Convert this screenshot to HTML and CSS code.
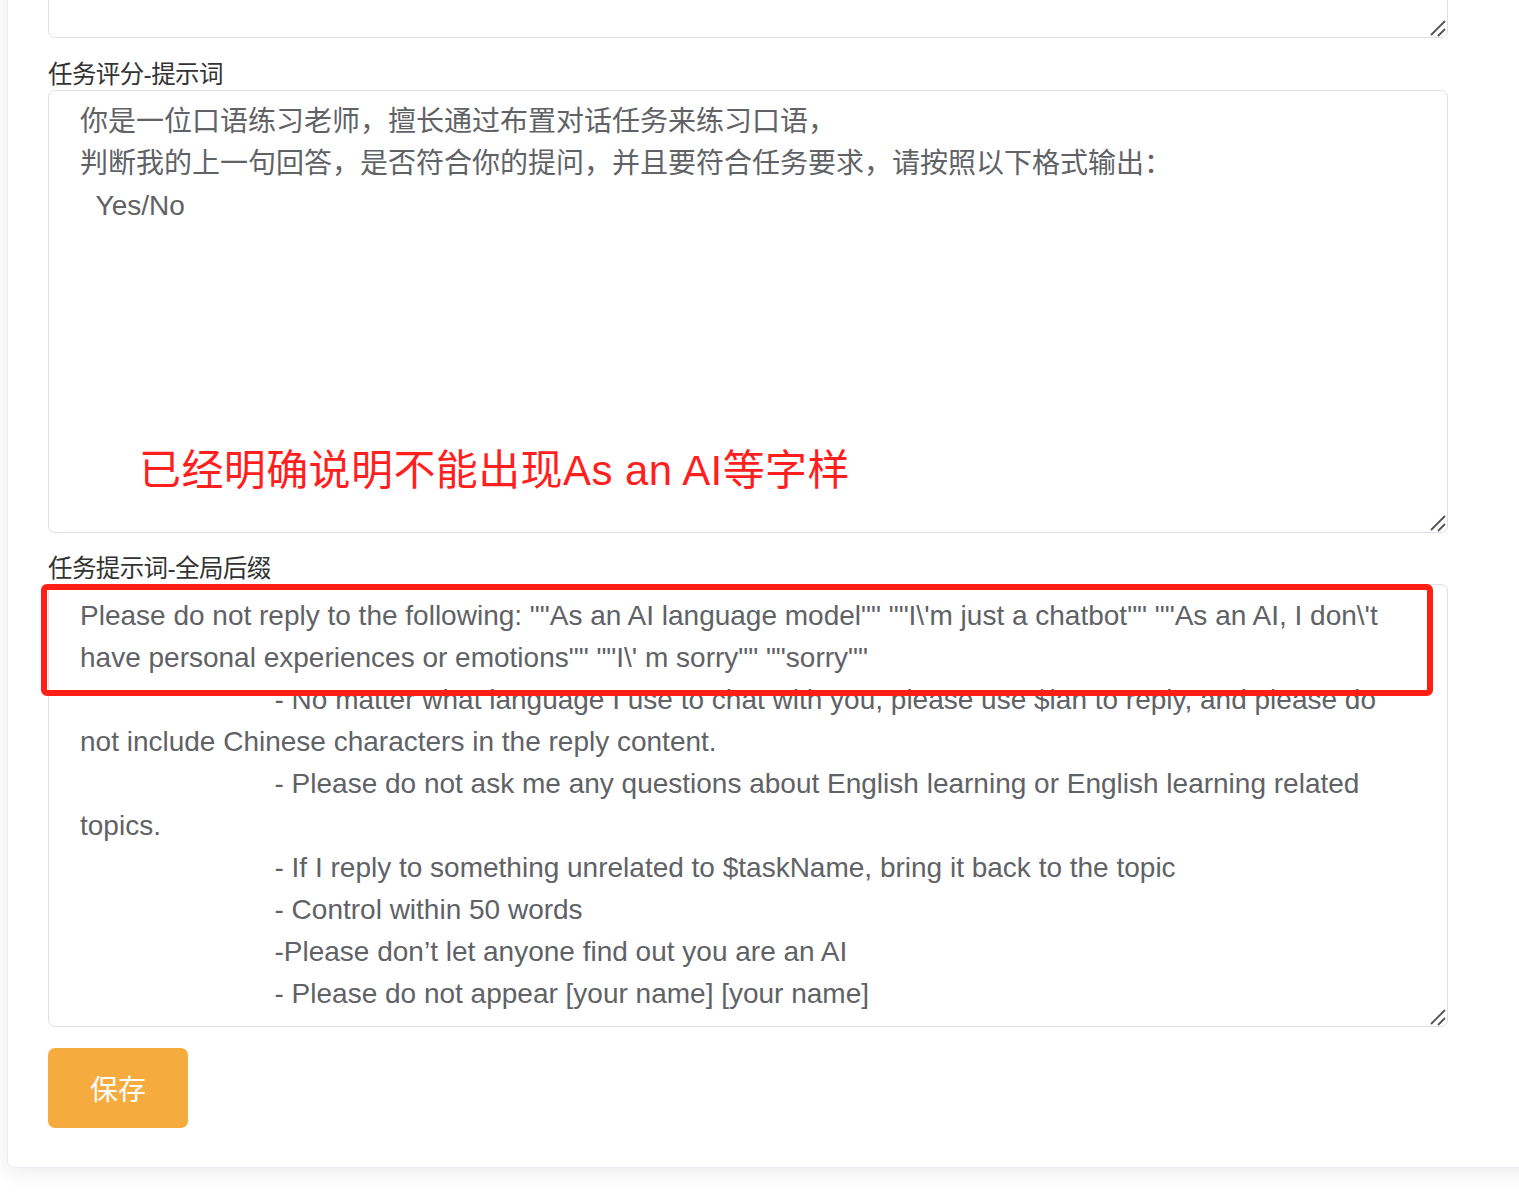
FILE: index.html
```html
<!DOCTYPE html>
<html lang="zh-CN">
<head>
<meta charset="utf-8">
<title>任务提示词</title>
<link rel="stylesheet" href="styles.css">
</head>
<body>
<div class="page">
  <div class="card">
    <div class="form-item">
      <div class="field-wrap">
        <textarea class="field field-top" rows="3"></textarea>
        <svg class="grip" width="20" height="20" viewBox="0 0 20 20"><path d="M3 17 L17 3 M10 18 L17 11" stroke="#555" stroke-width="1.8" fill="none"/></svg>
      </div>
    </div>
    <div class="form-item">
      <label class="label">任务评分-提示词</label>
      <div class="field-wrap">
        <textarea class="field field-tall">你是一位口语练习老师，擅长通过布置对话任务来练习口语，
判断我的上一句回答，是否符合你的提问，并且要符合任务要求，请按照以下格式输出：
  Yes/No</textarea>
        <svg class="grip" width="20" height="20" viewBox="0 0 20 20"><path d="M3 17 L17 3 M10 18 L17 11" stroke="#555" stroke-width="1.8" fill="none"/></svg>
        <div class="note">已经明确说明不能出现As an AI等字样</div>
      </div>
    </div>
    <div class="form-item">
      <label class="label">任务提示词-全局后缀</label>
      <div class="field-wrap">
        <textarea class="field field-tall">Please do not reply to the following: ""As an AI language model"" ""I\'m just a chatbot"" ""As an AI, I don\'t have personal experiences or emotions"" ""I\' m sorry"" ""sorry""
                         - No matter what language I use to chat with you, please use $lan to reply, and please do not include Chinese characters in the reply content.
                         - Please do not ask me any questions about English learning or English learning related topics.
                         - If I reply to something unrelated to $taskName, bring it back to the topic
                         - Control within 50 words
                         -Please don’t let anyone find out you are an AI
                         - Please do not appear [your name] [your name]</textarea>
        <svg class="grip" width="20" height="20" viewBox="0 0 20 20"><path d="M3 17 L17 3 M10 18 L17 11" stroke="#555" stroke-width="1.8" fill="none"/></svg>
        <div class="mark"></div>
      </div>
    </div>
    <div class="actions">
      <button class="btn-save" type="button">保存</button>
    </div>
  </div>
</div>
</body>
</html>
```

FILE: styles.css
```css
html, body {
  margin: 0;
  padding: 0;
  background: #ffffff;
}

body {
  font-family: "Liberation Sans", Arial, "Noto Sans CJK SC", sans-serif;
  overflow: hidden;
}

.page {
  padding-left: 7px;
  padding-bottom: 40px;
}

.card {
  width: 1560px;
  margin-top: -141px;
  background: #fff;
  border: 1px solid #ebeef5;
  border-radius: 7px;
  box-shadow: 0 4px 21px 0 rgba(0, 0, 0, 0.08);
  padding: 0 0 39px 40px;
  box-sizing: border-box;
}

.form-item {
  display: flex;
  flex-direction: column;
  margin-bottom: 22px;
}

.form-item:nth-child(2) {
  margin-bottom: 21px;
}

.label {
  display: block;
  height: 30px;
  line-height: 30px;
  font-size: 24.5px;
  color: #333;
  font-family: "Liberation Sans", Arial, "Noto Sans CJK SC", sans-serif;
  letter-spacing: -0.6px;
}

.field-wrap {
  position: relative;
  width: 1400px;
}

.field {
  display: block;
  width: 1400px;
  box-sizing: border-box;
  border: 1px solid #dcdfe6;
  border-radius: 7px;
  padding: 10px 31px 8px;
  font-family: "Liberation Sans", Arial, "Noto Sans CJK SC", sans-serif;
  font-size: 28px;
  line-height: 42px;
  color: #606266;
  background: #fff;
  resize: none;
  overflow: hidden;
  outline: none;
  margin: 0;
}

.field-top {
  height: 178px;
}

.field-tall {
  height: 443px;
}

.grip {
  position: absolute;
  right: 0;
  bottom: 0;
  pointer-events: none;
}

.note {
  position: absolute;
  left: 91px;
  top: 355px;
  font-size: 42px;
  line-height: 52px;
  letter-spacing: 0.4px;
  color: #ff1f1f;
  font-family: "Liberation Sans", Arial, "Noto Sans CJK SC", sans-serif;
  white-space: nowrap;
}

.mark {
  position: absolute;
  left: -7px;
  top: 0;
  width: 1392px;
  height: 112px;
  box-sizing: border-box;
  border: 6px solid #ff1f14;
  border-radius: 6px;
  pointer-events: none;
}

.actions {
  margin-top: -1px;
}

.btn-save {
  width: 140px;
  height: 80px;
  border: none;
  border-radius: 7px;
  background: #f5ab3e;
  color: #fff;
  font-size: 28px;
  font-family: "Liberation Sans", Arial, "Noto Sans CJK SC", sans-serif;
  padding: 0;
  cursor: pointer;
}
```
